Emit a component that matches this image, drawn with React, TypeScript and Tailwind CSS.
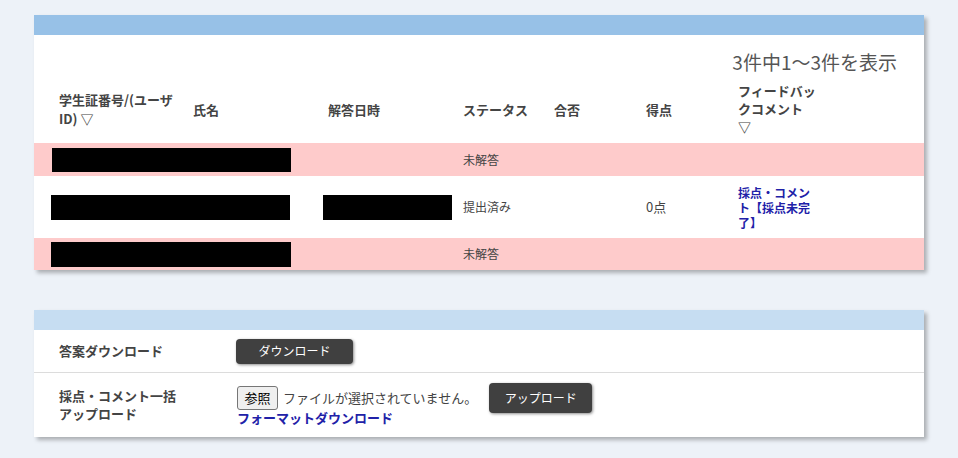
const font = { fontFamily: '"Noto Sans CJK JP", "Noto Sans", sans-serif' };

const cols = "grid grid-cols-[134px_135px_135px_91px_92px_92px_1fr] pl-[25px]";

const Redacted = ({ className = "" }: { className?: string }) => (
    <div className={`bg-black h-[24px] ${className}`} />
);

const FeedbackLink = () => (
    <a href="#" className="block w-[80px] text-[12px] font-bold leading-[15px] text-[#2121a8]">
        採点・コメント【採点未完了】
    </a>
);

const AnswerTable = () => (
    <div className="w-[890px] bg-white shadow-[3px_3px_4px_rgba(0,0,0,0.28)]">
        <div className="h-[20px] bg-[#97c1e7]" />

        <div className="pt-[14px] pr-[27px] text-right text-[19px] leading-[26px] text-[#555]">
            3件中1〜3件を表示
        </div>

        {/* header row */}
        <div className={`${cols} h-[68px] items-center text-[13px] font-bold leading-[19px] text-[#444]`}>
            <div className="w-[122px]">学生証番号/(ユーザID) ▽</div>
            <div>氏名</div>
            <div>解答日時</div>
            <div>ステータス</div>
            <div>合否</div>
            <div>得点</div>
            <div className="w-[80px] leading-[18px]">フィードバックコメント ▽</div>
        </div>

        <div className={`${cols} h-[33px] items-center bg-[#fecbcb] text-[12px] text-[#444]`}>
            <div className="col-span-3">
                <Redacted className="-ml-[7px] w-[239px]" />
            </div>
            <div>未解答</div>
        </div>

        <div className={`${cols} h-[62px] items-center bg-white text-[12px] text-[#444]`}>
            <div className="col-span-2">
                <Redacted className="-ml-[8px] w-[239px] h-[25px]" />
            </div>
            <div>
                <Redacted className="-ml-[5px] w-[129px] h-[25px]" />
            </div>
            <div>提出済み</div>
            <div />
            <div className="text-[13px]">0点</div>
            <div>
                <FeedbackLink />
            </div>
        </div>

        <div className={`${cols} h-[32px] items-center bg-[#fecbcb] text-[12px] text-[#444]`}>
            <div className="col-span-3">
                <Redacted className="-ml-[8px] w-[240px] h-[25px]" />
            </div>
            <div>未解答</div>
        </div>
    </div>
);

const DarkButton = ({ label, className = "" }: { label: string; className?: string }) => (
    <button
        type="button"
        className={`rounded-[4px] bg-[#404040] text-white text-[12px] shadow-[1px_1px_3px_rgba(0,0,0,0.45)] ${className}`}
    >
        {label}
    </button>
);

const ToolsPanel = () => (
    <div className="mt-[40px] w-[890px] bg-white shadow-[3px_3px_4px_rgba(0,0,0,0.28)]">
        <div className="h-[20px] bg-[#c6ddf2]" />

        <div className="flex h-[43px] items-center border-b border-[#dcdcdc] pl-[25px]">
            <div className="w-[176px] text-[13px] font-bold text-[#444]">答案ダウンロード</div>
            <DarkButton label="ダウンロード" className="ml-[1px] h-[25px] w-[117px]" />
        </div>

        <div className="flex h-[64px] items-center pl-[25px]">
            <div className="w-[178px] text-[13px] font-bold leading-[18px] text-[#444]">
                <div>採点・コメント一括</div>
                <div>アップロード</div>
            </div>
            <div className="flex flex-col">
                <div className="flex items-center">
                    <button
                        type="button"
                        className="h-[24px] w-[41px] rounded-[3px] border border-[#767676] bg-[#efefef] text-[13px] text-black"
                    >
                        参照
                    </button>
                    <span className="ml-[5px] text-[13px] text-[#444]">ファイルが選択されていません。</span>
                    <DarkButton label="アップロード" className="ml-[12px] h-[30px] w-[103px]" />
                </div>
                <a href="#" className="-mt-[4px] text-[13px] font-bold leading-[18px] text-[#2121a8]">
                    フォーマットダウンロード
                </a>
            </div>
        </div>
    </div>
);

export default function App() {
    return (
        <div className="min-h-screen bg-[#edf2f8] pt-[15px] pl-[34px]" style={font}>
            <AnswerTable />
            <ToolsPanel />
        </div>
    );
}
